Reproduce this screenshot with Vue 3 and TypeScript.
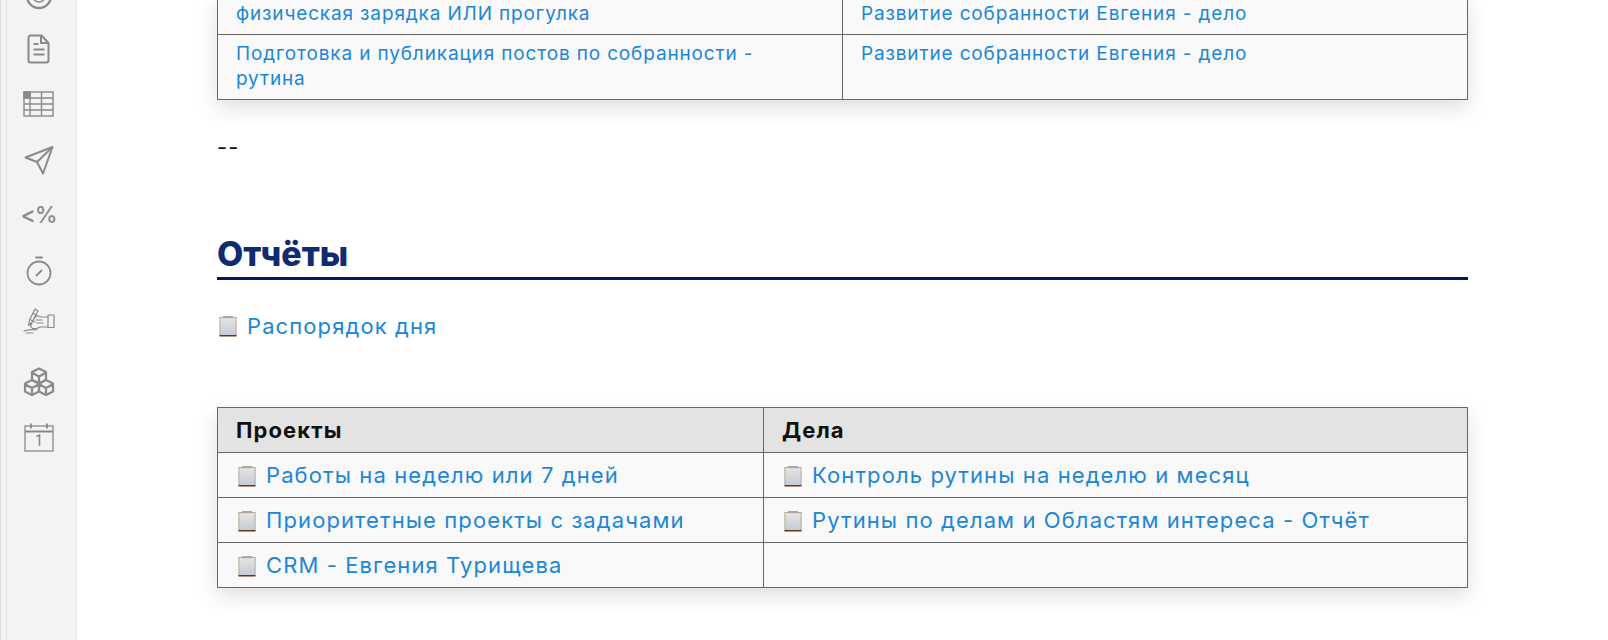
<script setup lang="ts">
const topRows = [
  { a: 'физическая зарядка ИЛИ прогулка', b: 'Развитие собранности Евгения - дело' },
  { a: 'Подготовка и публикация постов по собранности - рутина', b: 'Развитие собранности Евгения - дело' },
]
const rows = [
  { a: 'Работы на неделю или 7 дней', b: 'Контроль рутины на неделю и месяц' },
  { a: 'Приоритетные проекты с задачами', b: 'Рутины по делам и Областям интереса - Отчёт' },
  { a: 'CRM - Евгения Турищева', b: '' },
]
</script>

<template>
  <div class="page">
    <aside class="rail">
      <div class="slot s-clock">
        <svg width="28" height="28" viewBox="0 0 28 28" fill="none" stroke="#8a8a8a" stroke-width="2.4"><circle cx="14" cy="14" r="12" /><circle cx="14" cy="14" r="6" stroke-width="1.6" /></svg>
      </div>
      <div class="slot s-doc">
        <svg width="24" height="30" viewBox="0 0 24 30" fill="none" stroke="#8a8a8a" stroke-width="2" stroke-linejoin="round"><path d="M3.5 1.5h11l7 7.5v17.5a2 2 0 0 1-2 2h-16a2 2 0 0 1-2-2V3.5a2 2 0 0 1 2-2z" /><path d="M14 1.5v7.5h7.5M6.5 10h5M6.5 15.5h11M6.5 20.5h11" /></svg>
      </div>
      <div class="slot s-table">
        <svg width="31" height="26" viewBox="0 0 31 26" fill="none" stroke="#8a8a8a" stroke-width="1.4"><rect x="1" y="1" width="29" height="24" /><rect x="1" y="1" width="6" height="6" fill="#8a8a8a" /><path d="M1 7h29M1 13h29M1 19h29M7 1v24M18.5 1v24" /></svg>
      </div>
      <div class="slot s-send">
        <svg width="30" height="30" viewBox="0 0 30 30" fill="none" stroke="#8a8a8a" stroke-width="2" stroke-linejoin="round"><path d="M1.5 12.5 28.5 2 19 28.5 13 17z" /><path d="M13 17 28.5 2" /></svg>
      </div>
      <div class="slot s-code">&lt;%</div>
      <div class="slot s-timer">
        <svg width="26" height="30" viewBox="0 0 26 30" fill="none" stroke="#8a8a8a" stroke-width="1.8" stroke-linecap="round"><circle cx="13" cy="17" r="11.5" /><path d="M10 1.5h6M10.5 19.5l5-5" /></svg>
      </div>
      <div class="slot s-hand">
        <svg width="32" height="26" viewBox="0 0 32 26" fill="none" stroke="#8a8a8a" stroke-width="1.2" stroke-linejoin="round" stroke-linecap="round"><rect x="25" y="7" width="6" height="12.5" /><path d="M25 9h-7l-4-1.5-3 3-3.5 7.5 2 2.5h4.5l3-1.5h8M12 1 6.5 12l-1 5.5 3.5-3.5 6-11zM10 5l3 2M8 12l4 2M13 12h6M14 15h6M1 23c4-1 8-2 13-1M3 25h7" /></svg>
      </div>
      <div class="slot s-cubes">
        <svg width="32" height="30" viewBox="0 0 32 30" fill="none" stroke="#8a8a8a" stroke-width="2.2" stroke-linejoin="round"><path d="M16 1.5l7 3.5v8l-7 3.5-7-3.5V5zM9.5 6l6.5 3.5L22.5 6M16 9.5v7" /><path d="M9 13l7 3.5v8L9 28l-7-3.5v-8zM2.5 17.5 9 21l6.500-3.500M9 21v7" /><path d="M23 13l7 3.500v8L23 28l-7-3.500v-8zM16.500 17.500 23 21l6.500-3.500M23 21v7" /></svg>
      </div>
      <div class="slot s-cal">
        <svg width="30" height="30" viewBox="0 0 30 30" fill="none" stroke="#8a8a8a" stroke-width="1.300"><rect x="1" y="4" width="28" height="25" /><path d="M1 9.500h28M7 1.500v5M23 1.500v5" stroke-width="1.800" /><path d="M12.500 14.500l3-1.500v11" stroke-width="1.600" /></svg>
      </div>
    </aside>

    <main class="main">
      <div class="content">
        <table class="grid top">
          <colgroup><col class="t1" /><col /></colgroup>
          <tbody>
            <tr v-for="r in topRows" :key="r.a">
              <td><a>{{ r.a }}</a></td>
              <td><a>{{ r.b }}</a></td>
            </tr>
          </tbody>
        </table>

        <p class="dash">--</p>

        <h2 class="title">Отчёты</h2>

        <p class="link-line">
          <svg class="clip" viewBox="0 0 20 22"><defs><linearGradient id="pg" x1="0" y1="0" x2="0" y2="1"><stop offset="0" stop-color="#e6e6e2" /><stop offset="1" stop-color="#c4cad6" /></linearGradient></defs><rect x="1.500" y="2" width="17" height="19" fill="#a8987f" /><rect x="1.500" y="20" width="17" height="1.500" fill="#5f3a1c" /><rect x="2.300" y="2.800" width="15.400" height="17.200" fill="url(#pg)" /><rect x="5" y="1" width="10" height="2.200" fill="#a9a9a9" /></svg>
          <a>Распорядок дня</a>
        </p>

        <table class="grid big">
          <colgroup><col class="t2" /><col /></colgroup>
          <thead>
            <tr><th>Проекты</th><th>Дела</th></tr>
          </thead>
          <tbody>
            <tr v-for="r in rows" :key="r.a">
              <td>
                <svg class="clip" viewBox="0 0 20 22"><rect x="1.500" y="2" width="17" height="19" fill="#a8987f" /><rect x="1.500" y="20" width="17" height="1.500" fill="#5f3a1c" /><rect x="2.300" y="2.800" width="15.400" height="17.200" fill="url(#pg)" /><rect x="5" y="1" width="10" height="2.200" fill="#a9a9a9" /></svg>
                <a>{{ r.a }}</a>
              </td>
              <td>
                <template v-if="r.b">
                  <svg class="clip" viewBox="0 0 20 22"><rect x="1.500" y="2" width="17" height="19" fill="#a8987f" /><rect x="1.500" y="20" width="17" height="1.500" fill="#5f3a1c" /><rect x="2.300" y="2.800" width="15.400" height="17.200" fill="url(#pg)" /><rect x="5" y="1" width="10" height="2.200" fill="#a9a9a9" /></svg>
                  <a>{{ r.b }}</a>
                </template>
              </td>
            </tr>
          </tbody>
        </table>
      </div>
    </main>
  </div>
</template>

<style>
html, body { margin: 0; background: #fff; overflow: hidden; }
</style>

<style scoped>
.page {
  display: flex;
  height: 640px;
  overflow: hidden;
  font-family: Inter, "Liberation Sans", sans-serif;
  color: #111;
}
.rail {
  box-sizing: border-box;
  width: 77px;
  height: 640px;
  overflow: hidden;
  flex: none;
  background: linear-gradient(90deg, #f3f3f3 5px, #e2e2e2 5px, #e2e2e2 6px, #f3f3f3 6px);
  border-left: 1px solid #dcdcdc;
  border-right: 1px solid #e6e6e6;
}
.slot {
  display: flex;
  justify-content: center;
  align-items: center;
  color: #8a8a8a;
}
.s-clock { height: 28px; margin-top: -18px; }
.s-doc { height: 30px; margin-top: 24px; }
.s-table { height: 26px; margin-top: 27px; }
.s-send { height: 30px; margin-top: 28px; }
.s-code { height: 28px; margin-top: 26px; font: 500 23px Inter, sans-serif; letter-spacing: -1px; }
.s-timer { height: 30px; margin-top: 27px; }
.s-hand { height: 26px; margin-top: 22px; }
.s-cubes { height: 30px; margin-top: 33px; }
.s-cal { height: 30px; margin-top: 25px; }

.main { flex: 1; min-width: 0; }
.content {
  width: 1251px;
  margin-left: 140px;
  margin-top: -6.500px;
}
.grid {
  width: 1251px;
  table-layout: fixed;
  border-collapse: collapse;
  background: #f9f9f9;
  box-shadow: 0 8px 20px rgba(0, 0, 0, 0.13);
}
.grid td, .grid th {
  border: 1px solid #666;
  text-align: left;
  vertical-align: top;
}
a { color: #1c86d6; }
.t1 { width: 625px; }
.t2 { width: 546px; }
.top td {
  padding: 7.400px 18px;
  font-size: 19px;
  line-height: 24.600px;
  letter-spacing: 0.045em;
}
.dash {
  margin: 33px 0 0;
  font-size: 22px;
  line-height: 28px;
  letter-spacing: 0.05em;
}
.title {
  margin: 74px 0 0;
  padding-bottom: 4px;
  border-bottom: 3px solid #08185f;
  color: #122a70;
  font-family: Inter, sans-serif;
  font-weight: 800;
  font-size: 34px;
  line-height: 38px;
}
.link-line {
  margin: 32px 0 0;
  font-size: 22px;
  line-height: 28px;
  letter-spacing: 0.05em;
  display: flex;
  align-items: center;
  gap: 8px;
}
.clip { width: 22px; height: 22px; vertical-align: -4px; margin-right: 8px; }
.link-line .clip { margin-right: 0; }
.big { margin-top: 67px; }
.big th, .big td {
  padding: 0 18px;
  height: 44px;
  font-size: 22px;
  line-height: 44px;
  letter-spacing: 0.05em;
}
.big th { background: #e3e3e3; font-weight: 700; }
</style>
